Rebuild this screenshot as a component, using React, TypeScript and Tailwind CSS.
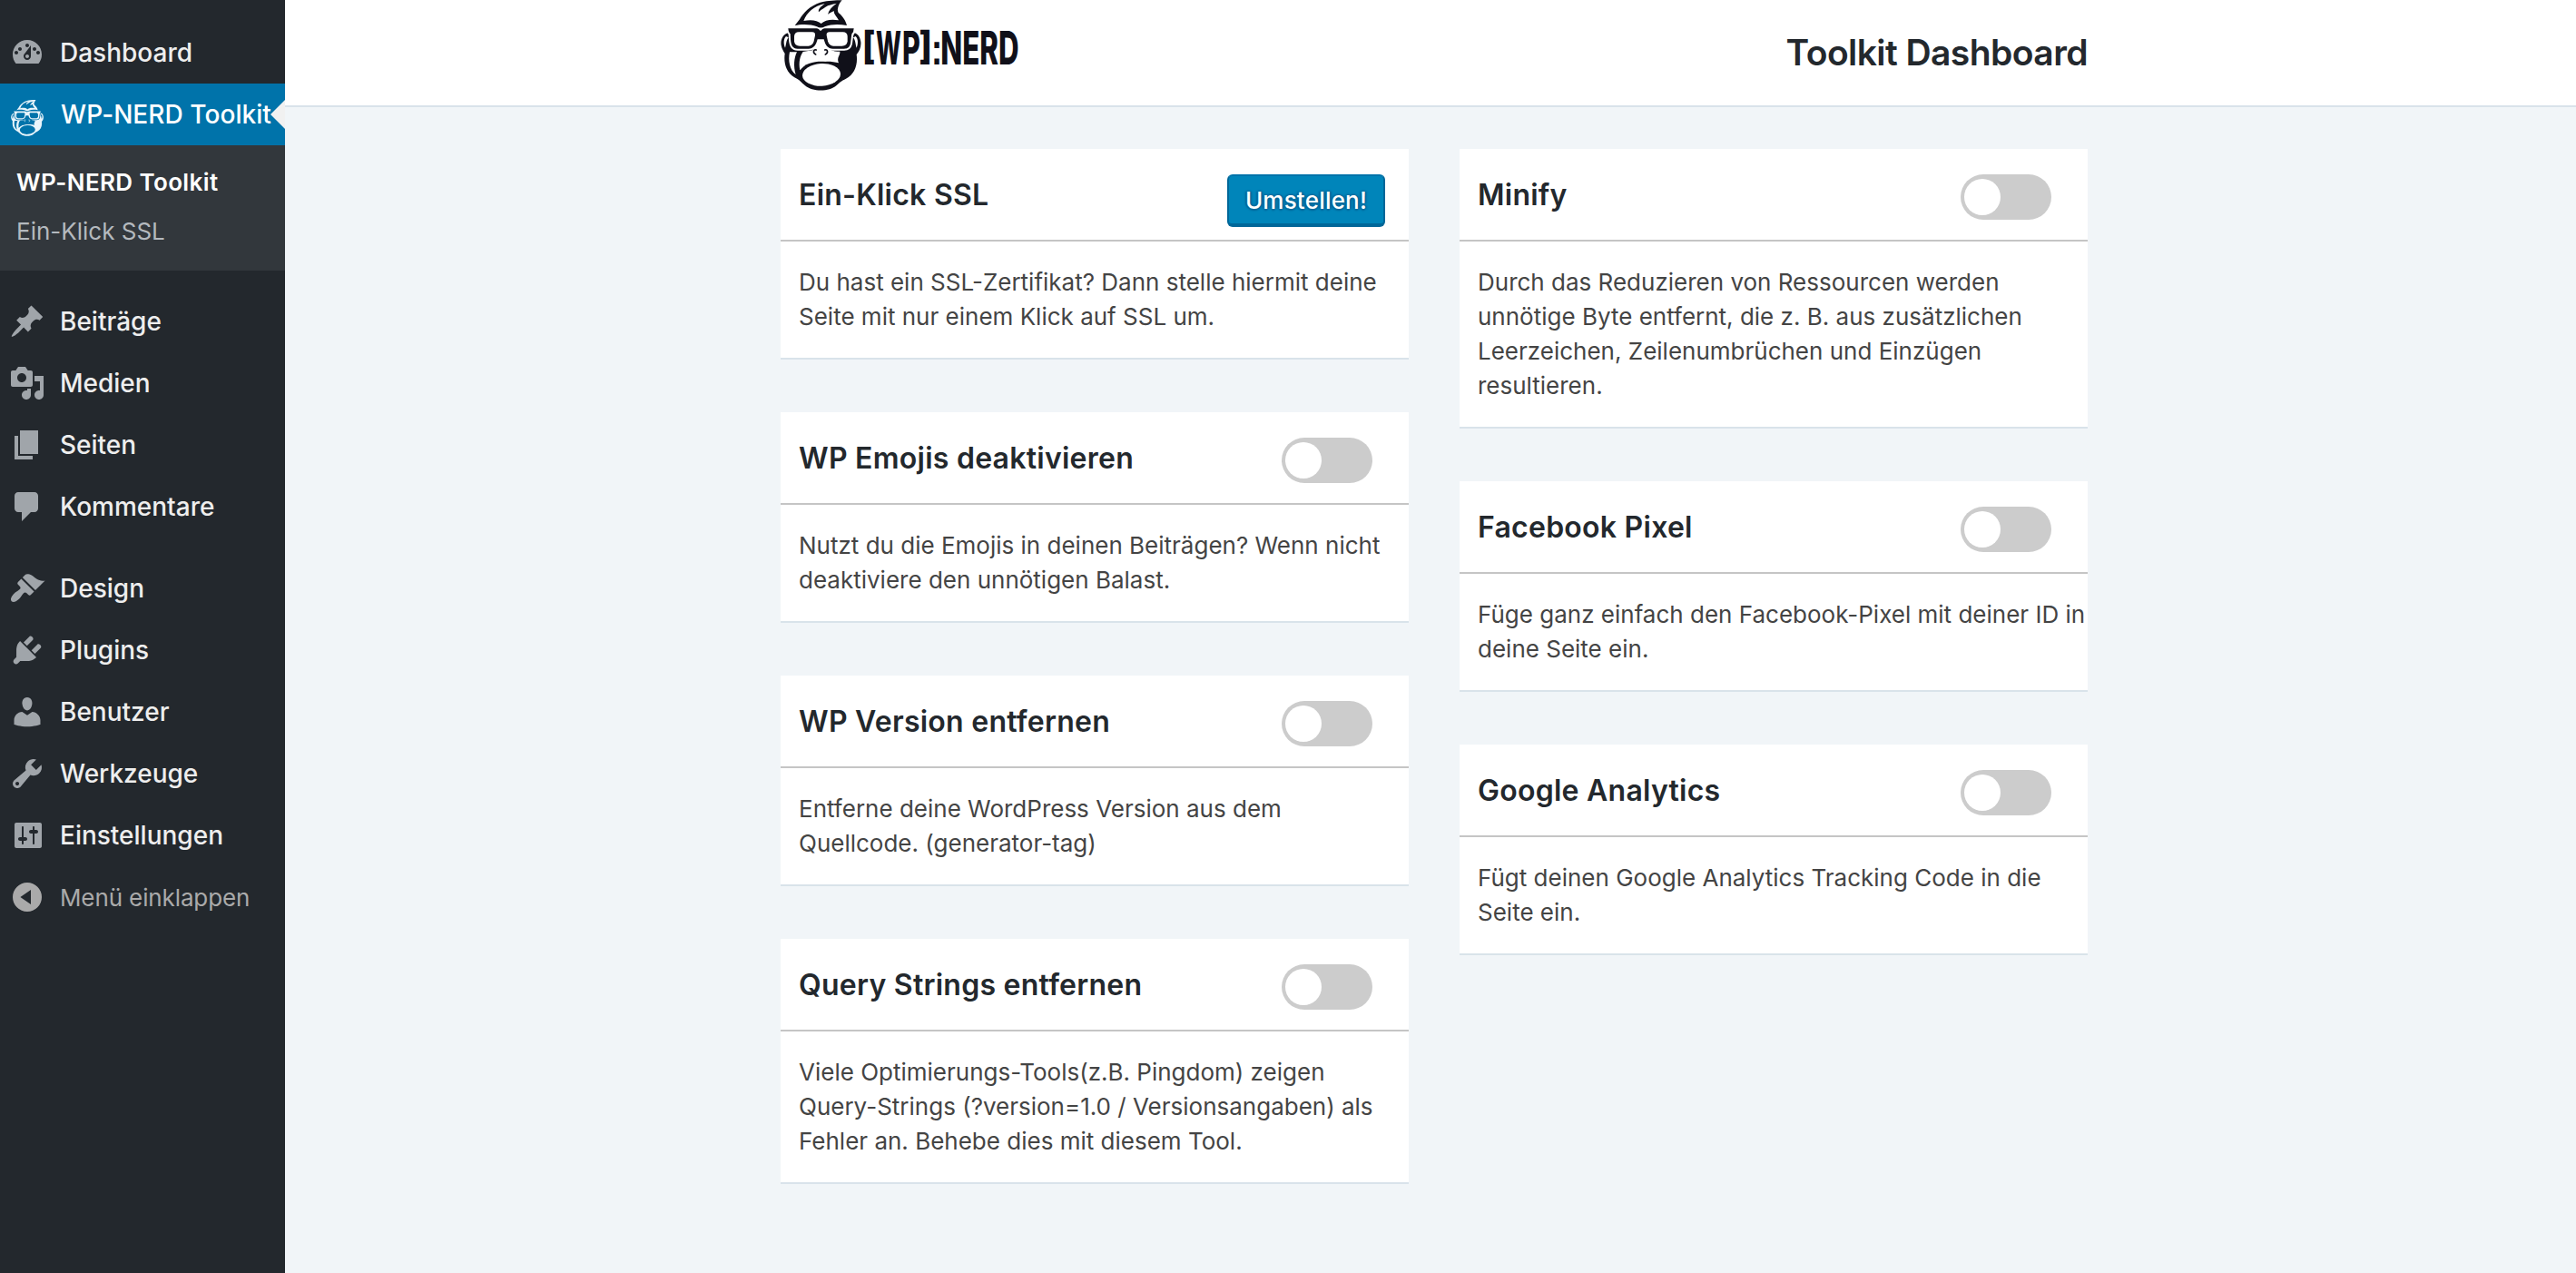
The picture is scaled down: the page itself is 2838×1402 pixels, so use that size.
import type { ReactNode } from "react";

const ICONS = {
  dashboard:
    "M3.76 17h12.48A7.956 7.956 0 0 0 18 12c0-4.41-3.58-8-8-8s-8 3.59-8 8c0 1.9.66 3.65 1.76 5zM10 6c.55 0 1 .45 1 1s-.45 1-1 1-1-.45-1-1 .45-1 1-1zM6 8c.55 0 1 .45 1 1s-.45 1-1 1-1-.45-1-1 .45-1 1-1zm8 0c.55 0 1 .45 1 1s-.45 1-1 1-1-.45-1-1 .45-1 1-1zm-5.37 3.55L12 7v6c0 1.1-.9 2-2 2s-2-.9-2-2c0-.57.24-1.08.63-1.45zM4 10c.55 0 1 .45 1 1s-.45 1-1 1-1-.45-1-1 .45-1 1-1zm12 0c.55 0 1 .45 1 1s-.45 1-1 1-1-.45-1-1 .45-1 1-1zm-5 3c0-.55-.45-1-1-1s-1 .45-1 1 .45 1 1 1 1-.45 1-1z",
  post: "M10.44 3.02l1.82-1.82 6.36 6.35-1.83 1.82c-1.05-.68-2.48-.57-3.41.36l-.75.75c-.92.93-1.04 2.35-.35 3.41l-1.83 1.82-2.41-2.41-2.8 2.79c-.42.42-3.38 2.71-3.8 2.29s1.86-3.39 2.28-3.81l2.79-2.79L4.1 9.36l1.83-1.82c1.05.69 2.48.57 3.4-.36l.75-.75c.93-.92 1.05-2.35.36-3.41z",
  media:
    "M13 11V4c0-.55-.45-1-1-1h-1.67L9 1H5L3.67 3H2c-.55 0-1 .45-1 1v7c0 .55.45 1 1 1h10c.55 0 1-.45 1-1zM7 4.5c1.38 0 2.5 1.12 2.5 2.5S8.38 9.5 7 9.5 4.5 8.38 4.5 7 5.62 4.5 7 4.5zM14 6h5v10.5c0 1.38-1.12 2.5-2.5 2.5S14 17.88 14 16.5s1.12-2.5 2.5-2.5c.17 0 .34.02.5.05V9h-3V6zm-4 8.05V13h2v3.5c0 1.38-1.12 2.5-2.5 2.5S7 17.88 7 16.5 8.12 14 9.5 14c.17 0 .34.02.5.05z",
  pages: "M6 15V2h10v13H6zm-1 1h8v2H3V5h2v11z",
  comments:
    "M5 2h9c1.1 0 2 .9 2 2v7c0 1.1-.9 2-2 2h-2l-5 5v-5H5c-1.1 0-2-.9-2-2V4c0-1.1.9-2 2-2z",
  appearance:
    "M14.48 11.06L7.41 3.99l1.5-1.5c.5-.56 2.3-.47 3.51.32 1.21.8 1.43 1.28 2.91 2.1 1.18.64 2.45 1.26 4.45.85zm-.71.71L6.7 4.7 4.93 6.47c-.39.39-.39 1.02 0 1.41l1.06 1.06c.39.39.39 1.03 0 1.42-.6.6-1.43 1.11-2.21 1.69-.35.26-.7.53-1.01.84C1.43 14.23.4 16.08 1.4 17.07c.99 1 2.84-.03 4.18-1.36.31-.31.58-.66.85-1.02.57-.78 1.08-1.61 1.69-2.21.39-.39 1.02-.39 1.41 0l1.06 1.06c.39.39 1.02.39 1.41 0z",
  plugins:
    "M13.11 4.36L9.87 7.6 8 5.73l3.24-3.24c.35-.34 1.05-.2 1.56.32.52.51.66 1.21.31 1.55zm-8 1.77l.91-1.12 9.01 9.01-1.19.84c-.71.71-2.63 1.16-3.82 1.16H6.14L4.9 17.26c-.59.59-1.54.59-2.12 0-.59-.58-.59-1.53 0-2.12l1.24-1.24v-3.88c0-1.13.4-3.19 1.09-3.89zm7.26 3.97l3.24-3.24c.34-.35 1.04-.21 1.55.31.52.51.66 1.21.31 1.55l-3.24 3.25z",
  users:
    "M10 9.25c-2.27 0-2.73-3.44-2.73-3.44C7 4.02 7.82 2 9.97 2c2.16 0 2.98 2.02 2.71 3.81 0 0-.41 3.44-2.68 3.44zm0 2.57L12.72 10c2.39 0 4.52 2.33 4.52 4.53v2.49s-3.65 1.13-7.24 1.13c-3.65 0-7.24-1.13-7.24-1.13v-2.49c0-2.25 1.94-4.48 4.47-4.48z",
  tools:
    "M16.68 9.77c-1.34 1.34-3.3 1.67-4.95.99l-5.41 6.52c-.99.99-2.59.99-3.58 0s-.99-2.59 0-3.57l6.52-5.42c-.68-1.65-.35-3.61.99-4.95 1.28-1.28 3.12-1.62 4.72-1.06l-2.89 2.89 2.82 2.82 2.86-2.87c.53 1.58.18 3.39-1.08 4.65zM3.81 16.21c.4.39 1.04.39 1.43 0 .4-.4.4-1.04 0-1.43-.39-.4-1.03-.4-1.43 0-.39.39-.39 1.03 0 1.43z",
  settings:
    "M18 16V4c0-.55-.45-1-1-1H4c-.55 0-1 .45-1 1v12c0 .55.45 1 1 1h13c.55 0 1-.45 1-1zM8 11h1c.55 0 1 .45 1 1s-.45 1-1 1H8v1.5c0 .28-.22.5-.5.5s-.5-.22-.5-.5V13H6c-.55 0-1-.45-1-1s.45-1 1-1h1V5.5c0-.28.22-.5.5-.5s.5.22.5.5V11zm5-2h-1c-.55 0-1-.45-1-1s.45-1 1-1h1V5.5c0-.28.22-.5.5-.5s.5.22.5.5V7h1c.55 0 1 .45 1 1s-.45 1-1 1h-1v5.5c0 .28-.22.5-.5.5s-.5-.22-.5-.5V9z",
  collapse: "M10 2a8 8 0 1 0 0 16 8 8 0 0 0 0-16zM6.2 10L12 6v8z",
};

type IconName = keyof typeof ICONS;

function Icon({ name }: { name: IconName }) {
  return (
    <svg
      viewBox={name === "dashboard" ? "0 1 20 20" : "0 0 20 20"}
      className="ml-[10px] size-10 shrink-0"
      fill="currentColor"
      fillRule="evenodd"
    >
      <path d={ICONS[name]} />
    </svg>
  );
}

function Gorilla({ ink, paper }: { ink: string; paper: string }) {
  return (
    <g>
      <path
        fill={ink}
        d="M38 108C18 112 11 135 14 150C16 162 22 170 26 177C22 205 28 238 58 256C74 263 82 274 93 283C118 304 172 304 196 283C206 274 212 267 228 260C256 246 268 214 263 180C272 170 279 155 277 138C274 118 266 110 250 107Z"
      />
      <path fill={paper} d="M30 120C23 126 20 142 27 158C30 150 30 134 38 124Z" />
      <path fill={paper} d="M260 120C267 126 270 142 263 158C260 150 260 134 252 124Z" />
      <path fill={paper} d="M42 172C36 200 42 232 62 246C54 220 56 192 66 172Z" />
      <path
        fill={paper}
        d="M76 232C71 205 76 186 86 171L118 166L118 120L172 120L172 160C180 168 192 172 208 170C210 182 196 190 204 208C170 198 110 202 76 232Z"
      />
      <path fill={ink} d="M76 236C90 206 130 202 160 204C186 206 205 214 214 232L200 250L90 262Z" />
      <ellipse cx="147" cy="247" rx="63" ry="37" fill={paper} transform="rotate(-3 147 247)" />
      <path
        fill={ink}
        stroke={paper}
        strokeWidth="12"
        paintOrder="stroke"
        d="M37 94L130 94C138 94 140 100 144 102C149 100 150 94 158 94L254 94L252 106C248 110 247 112 246 120L243 144C240 158 232 161 222 161L185 161C168 161 160 150 155 130L134 130C129 150 120 161 104 161L68 161C52 161 46 150 45 130L44 112C40 108 38 104 37 94Z"
      />
      <path
        fill={paper}
        d="M72 106L116 106C124 106 127 110 126 117L122 136C119 147 112 152 104 152L76 152C64 152 58 146 57 136L57 120C57 111 63 106 72 106Z"
      />
      <path
        fill={paper}
        d="M218 106L174 106C166 106 163 110 164 117L168 136C171 147 178 152 186 152L214 152C226 152 232 146 233 136L233 120C233 111 227 106 218 106Z"
      />
      <path
        fill="none"
        stroke={ink}
        strokeWidth="5"
        strokeLinecap="round"
        d="M130 165C121 162 117 174 128 180M158 165C167 162 171 174 160 180"
      />
      <path
        fill={ink}
        stroke={paper}
        strokeWidth="6"
        paintOrder="stroke"
        d="M215 1C190 0 160 4 143 8C110 18 85 44 75 64L59 84C80 79 112 79 132 88C140 93 150 93 158 88C180 79 205 79 231 84C227 68 216 52 203 42C200 34 200 30 202 24C204 16 208 8 215 1Z"
      />
      <path
        fill={paper}
        d="M88 69C98 42 122 20 158 12C142 24 136 30 138 40C148 30 158 26 168 19C180 14 188 13 197 11C182 22 172 32 168 47C176 41 184 40 188 36C188 48 200 58 204 67C180 62 158 66 146 78C134 66 110 64 88 69Z"
      />
    </g>
  );
}

/* Condensed lettering: each run is [text, x, baseline, horizontal scale, size]. */
const WORDMARK: [string, number, number, number, number][] = [
  ["[", 281, 194.6, 0.93, 125],
  ["W", 327, 213, 0.52, 152],
  ["P", 414, 213, 0.6, 152],
  ["]", 469, 194.6, 0.93, 125],
  ["NERD", 541, 213, 0.617, 152],
];

function Logo() {
  return (
    <svg viewBox="12 0 798 312" className="h-[104px] w-[266px]" fill="#101019">
      <Gorilla ink="#101019" paper="#ffffff" />
      {WORDMARK.map(([text, x, y, scale, size]) => (
        <text
          key={text}
          transform={`translate(${x} ${y}) scale(${scale} 1)`}
          fontSize={size}
          className="font-['Inter'] font-extrabold"
        >
          {text}
        </text>
      ))}
      <text transform="translate(509 213) scale(0.8 1)" fontSize="142" className="font-['Liberation_Sans'] font-bold">
        :
      </text>
    </svg>
  );
}

function MenuItem({ icon, children }: { icon: IconName; children: ReactNode }) {
  return (
    <li className="flex h-[68px] items-center text-[28px] leading-9 font-[450] text-[#eeeeee]">
      <span className="flex w-[66px] text-[#a0a5aa]">
        <Icon name={icon} />
      </span>
      {children}
    </li>
  );
}

function Sidebar() {
  return (
    <nav className="w-[314px] shrink-0 bg-[#23282d] pt-6">
      <ul>
        <MenuItem icon="dashboard">Dashboard</MenuItem>
        <li className="relative flex h-[68px] items-center bg-[#0073aa] text-[28px] leading-9 font-[450] tracking-[0.06px] whitespace-nowrap text-white">
          <span className="flex w-[67px] shrink-0 pt-2 pl-3">
            <svg viewBox="12 0 266 300" preserveAspectRatio="none" className="h-10 w-9">
              <Gorilla ink="#e9f5fb" paper="#0073aa" />
            </svg>
          </span>
          WP-NERD Toolkit
          <span className="absolute top-[18px] right-0 border-y-16 border-r-16 border-y-transparent border-r-[#f1f1f1]" />
        </li>
        <li className="h-[138px] bg-[#32373c] pt-[14px] pl-[18px] text-[26px] leading-[54px]">
          <p className="font-semibold tracking-[0.38px] text-white">WP-NERD Toolkit</p>
          <p className="text-[#b4b9be]">Ein-Klick SSL</p>
        </li>
      </ul>
      <ul className="mt-[22px]">
        <MenuItem icon="post">Beiträge</MenuItem>
        <MenuItem icon="media">Medien</MenuItem>
        <MenuItem icon="pages">Seiten</MenuItem>
        <MenuItem icon="comments">Kommentare</MenuItem>
      </ul>
      <ul className="mt-[22px]">
        <MenuItem icon="appearance">Design</MenuItem>
        <MenuItem icon="plugins">Plugins</MenuItem>
        <MenuItem icon="users">Benutzer</MenuItem>
        <MenuItem icon="tools">Werkzeuge</MenuItem>
        <MenuItem icon="settings">Einstellungen</MenuItem>
        <li className="flex h-[68px] items-center text-[26px] tracking-[-0.12px] text-[#aaaaaa]">
          <span className="flex w-[66px]">
            <Icon name="collapse" />
          </span>
          Menü einklappen
        </li>
      </ul>
    </nav>
  );
}

function Toggle() {
  return (
    <button className="mr-10 h-[50px] w-[100px] rounded-full bg-[#cccccc] p-1">
      <span className="block size-10 rounded-full bg-white" />
    </button>
  );
}

function Card({ title, text, action }: { title: string; text: string; action?: ReactNode }) {
  return (
    <section className="border-b-2 border-[#d9e3ea] bg-white">
      <header className="flex h-[102px] items-start justify-between border-b-2 border-[#c5c5c5] pt-7 pl-5">
        <h2 className="text-[32px] leading-[45px] font-semibold tracking-[0.25px] text-[#23282d]">{title}</h2>
        {action ?? <Toggle />}
      </header>
      <p className="py-[26px] pl-5 text-[26px] leading-[38px] whitespace-pre text-[#444444]">{text}</p>
    </section>
  );
}

export default function App() {
  return (
    <div className="flex h-[1402px] w-[2838px] overflow-hidden bg-[#f1f5f8] font-['Inter',sans-serif]">
      <Sidebar />
      <main className="flex-1">
        <header className="h-[118px] border-b-2 border-[#d9e3ea] bg-white pl-[546px]">
          <div className="flex w-[1440px] justify-between">
            <Logo />
            <h1 className="mt-[30px] text-[39px] leading-14 font-semibold tracking-[-0.57px] text-[#23282d]">Toolkit Dashboard</h1>
          </div>
        </header>
        <div className="mt-[46px] ml-[546px] grid w-[1440px] grid-cols-2 items-start gap-x-14">
          <div className="grid gap-y-[58px]">
            <Card
              title="Ein-Klick SSL"
              text={"Du hast ein SSL-Zertifikat? Dann stelle hiermit deine\nSeite mit nur einem Klick auf SSL um."}
              action={
                <button className="mr-[26px] h-[58px] w-[174px] rounded-md border-2 border-b-4 border-[#006799] border-t-[#0073aa] bg-[#0085ba] pt-px text-[26px] leading-[51px] font-[450] tracking-[0.2px] text-white [text-shadow:0_-1px_2px_#006799,2px_0_2px_#006799,0_2px_2px_#006799,-2px_0_2px_#006799]">
                  Umstellen!
                </button>
              }
            />
            <Card
              title="WP Emojis deaktivieren"
              text={"Nutzt du die Emojis in deinen Beiträgen? Wenn nicht\ndeaktiviere den unnötigen Balast."}
            />
            <Card
              title="WP Version entfernen"
              text={"Entferne deine WordPress Version aus dem\nQuellcode. (generator-tag)"}
            />
            <Card
              title="Query Strings entfernen"
              text={"Viele Optimierungs-Tools(z.B. Pingdom) zeigen\nQuery-Strings (?version=1.0 / Versionsangaben) als\nFehler an. Behebe dies mit diesem Tool."}
            />
          </div>
          <div className="grid gap-y-[58px]">
            <Card
              title="Minify"
              text={"Durch das Reduzieren von Ressourcen werden\nunnötige Byte entfernt, die z. B. aus zusätzlichen\nLeerzeichen, Zeilenumbrüchen und Einzügen\nresultieren."}
            />
            <Card
              title="Facebook Pixel"
              text={"Füge ganz einfach den Facebook-Pixel mit deiner ID in\ndeine Seite ein."}
            />
            <Card
              title="Google Analytics"
              text={"Fügt deinen Google Analytics Tracking Code in die\nSeite ein."}
            />
          </div>
        </div>
      </main>
    </div>
  );
}
